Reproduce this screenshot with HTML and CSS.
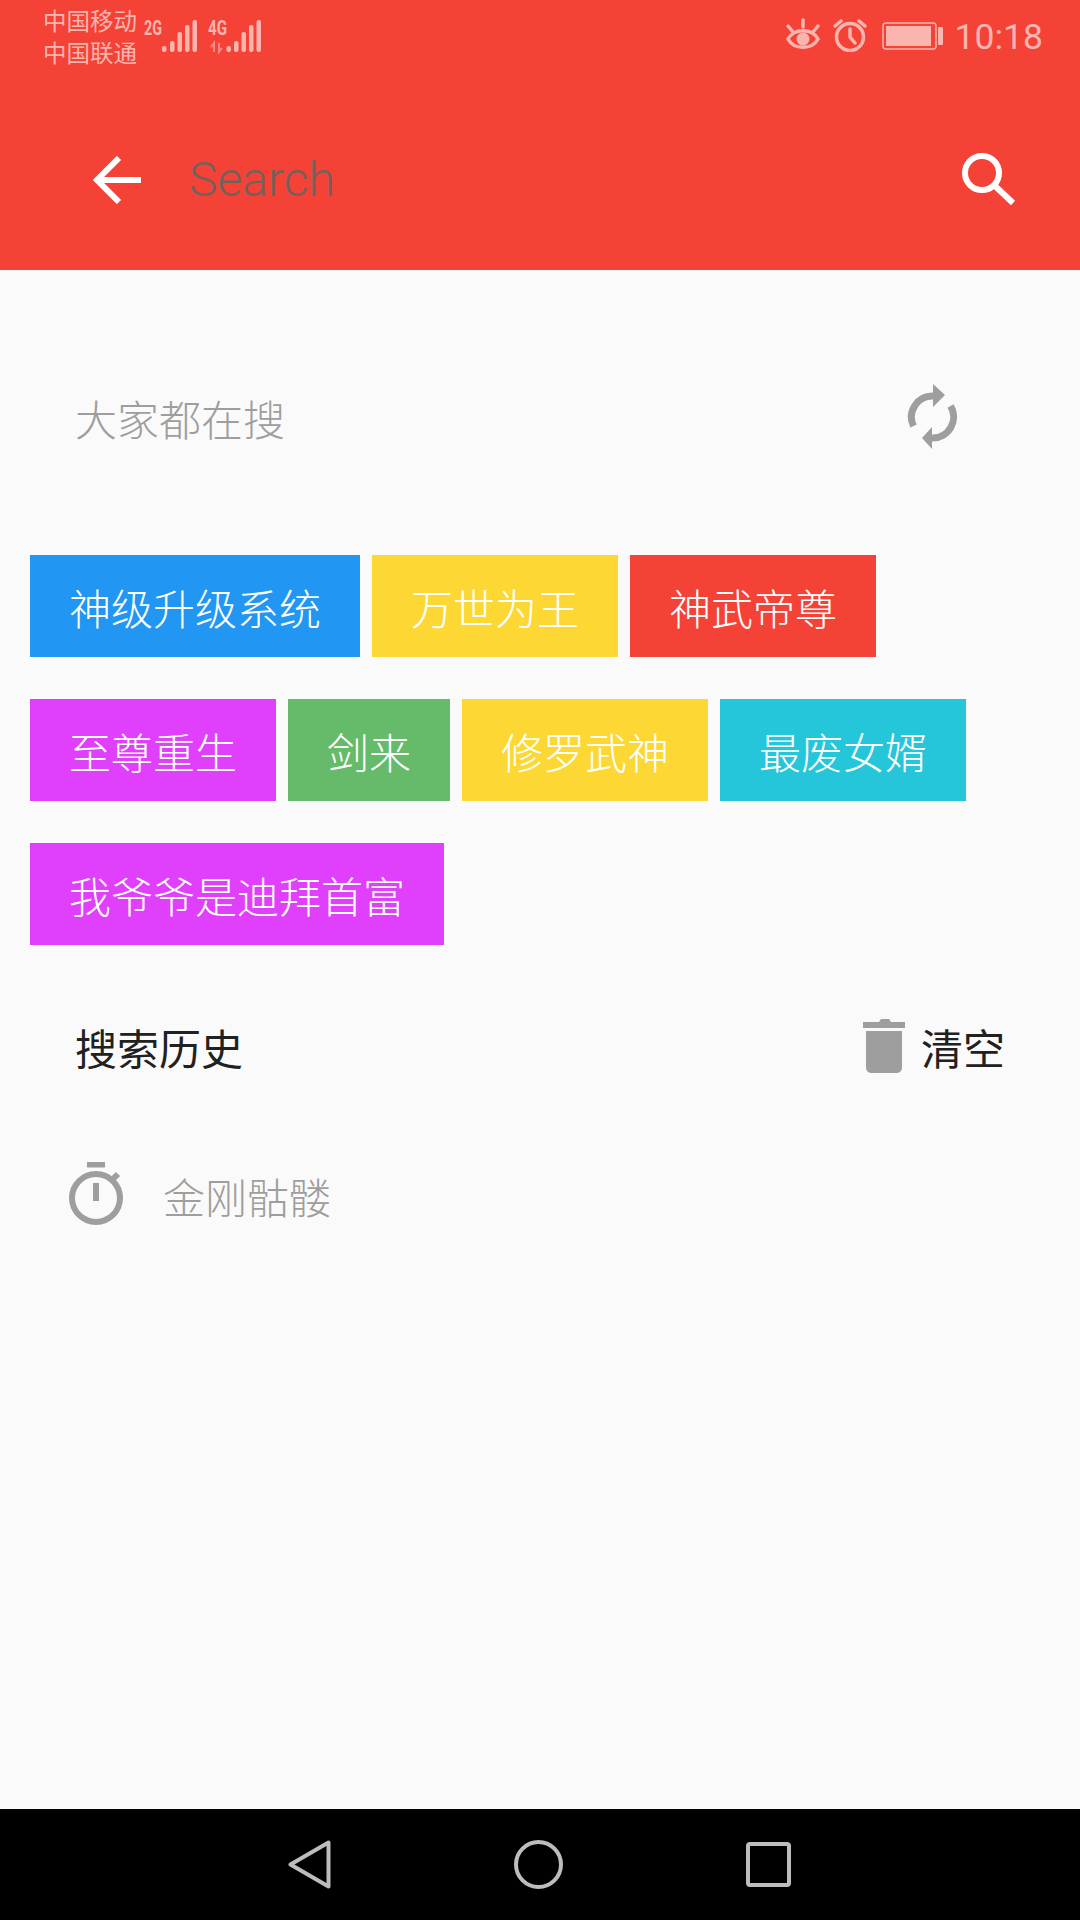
FILE: index.html
```html
<!DOCTYPE html>
<html lang="zh">
<head>
    <meta charset="UTF-8">
    <meta name="viewport" content="width=device-width, initial-scale=1.0">
    <title>Search</title>
    <link rel="stylesheet" href="styles.css">
</head>
<body>
    <header class="header">
        <div class="status-bar">
            <div class="carriers">
                <span>中国移动</span>
                <span>中国联通</span>
            </div>
            <svg class="signal" width="54" height="42" viewBox="144 12 54 42">
                <text x="144" y="35" class="net-label" textLength="18" lengthAdjust="spacingAndGlyphs">2G</text>
                <g class="bars">
                    <rect x="162" y="46" width="4.5" height="6" rx="2"/>
                    <rect x="170" y="41" width="4.5" height="11" rx="2"/>
                    <rect x="177.5" y="32" width="4.5" height="20" rx="2"/>
                    <rect x="185" y="25" width="4.5" height="27" rx="2"/>
                    <rect x="192.5" y="20" width="4.5" height="32" rx="2"/>
                </g>
            </svg>
            <svg class="signal signal-second" width="54" height="42" viewBox="208 12 54 42">
                <text x="208" y="35" class="net-label" textLength="19" lengthAdjust="spacingAndGlyphs">4G</text>
                <path class="updown" d="M214 52v-9l-3 4M219 43v9l3-4"/>
                <g class="bars">
                    <rect x="226.5" y="46" width="4.5" height="6" rx="2"/>
                    <rect x="234" y="41" width="4.5" height="11" rx="2"/>
                    <rect x="241.5" y="32" width="4.5" height="20" rx="2"/>
                    <rect x="249" y="25" width="4.5" height="27" rx="2"/>
                    <rect x="256.5" y="20" width="4.5" height="32" rx="2"/>
                </g>
            </svg>
            <div class="status-right">
                <svg class="status-icon" width="36" height="34" viewBox="0 0 36 34">
                    <path class="thin-line" d="M3 21C9 10 27 10 33 21C27 32 9 32 3 21Z"/>
                    <circle class="solid" cx="18" cy="21" r="6.5"/>
                    <path class="thin-line" d="M18 9V2M8 14L3 8M28 14L33 8"/>
                </svg>
                <svg class="status-icon" width="34" height="34" viewBox="0 0 34 34">
                    <circle cx="17" cy="19" r="13.5"/>
                    <path d="M17 11V19L22 25M2 8L8 3M32 8L26 3"/>
                </svg>
                <svg class="status-icon battery" width="61" height="28" viewBox="0 0 61 28">
                    <rect class="thin" x="1" y="1" width="53" height="26" rx="3"/>
                    <rect class="solid" x="4" y="4" width="45" height="20"/>
                    <rect class="solid" x="56" y="5" width="5" height="18" rx="1"/>
                </svg>
                <span class="clock">10:18</span>
            </div>
        </div>
        <div class="toolbar">
            <svg class="back-icon" width="48" height="48" viewBox="0 0 48 48">
                <path d="M48 24H4M26 2L4 24L26 46"/>
            </svg>
            <span class="search-hint">Search</span>
            <svg class="search-icon" width="54" height="54" viewBox="0 0 54 54">
                <circle cx="20" cy="20" r="17"/>
                <path d="M32 32L51 50"/>
            </svg>
        </div>
    </header>

    <main class="content">
        <div class="section-head hot-head">
            <span class="hot-title">大家都在搜</span>
            <svg class="refresh-icon" width="56" height="72" viewBox="905 384 56 72">
                <path class="arc" d="M913.500 426A21 21 0 0 1 933 396M950.500 406A21 21 0 0 1 932 438"/>
                <path class="head" d="M933 384L945 395L933 407ZM932 427L922 438L932 449Z"/>
            </svg>
        </div>

        <div class="tags">
            <span class="tag blue">神级升级系统</span>
            <span class="tag yellow">万世为王</span>
            <span class="tag red">神武帝尊</span>
            <span class="tag purple">至尊重生</span>
            <span class="tag green">剑来</span>
            <span class="tag yellow">修罗武神</span>
            <span class="tag cyan">最废女婿</span>
            <span class="tag purple">我爷爷是迪拜首富</span>
        </div>

        <div class="section-head history-head">
            <span class="history-title">搜索历史</span>
            <div class="clear-btn">
                <svg width="42" height="54" viewBox="0 0 42 54">
                    <path class="grey-fill" d="M0 3H16L18 0H26L28 3H42V9H0ZM3 12H39V48Q39 54 33 54H9Q3 54 3 48Z"/>
                </svg>
                <span>清空</span>
            </div>
        </div>

        <div class="history-item">
            <svg class="timer-icon" width="56" height="64" viewBox="0 0 56 64">
                <circle cx="27" cy="36" r="24"/>
                <path d="M18 2.500H36M27 21V39M44 17L49 12"/>
            </svg>
            <span>金刚骷髅</span>
        </div>
    </main>

    <nav class="nav-bar">
        <svg width="43" height="49" viewBox="0 0 43 49">
            <path d="M40.500 2.500V46.500L2.500 24.500Z"/>
        </svg>
        <svg width="49" height="49" viewBox="0 0 49 49">
            <circle cx="24.500" cy="24.500" r="22.500"/>
        </svg>
        <svg class="nav-square" width="45" height="45" viewBox="0 0 45 45">
            <rect x="2" y="2" width="41" height="41" rx="2"/>
        </svg>
    </nav>
</body>
</html>
```

FILE: styles.css
```css
:root {
    --red: #f44336;
    --status-color: #fbb5af;
    --grey: #9e9e9e;
    --font-family: 'Roboto', 'Noto Sans CJK SC', sans-serif;
}

* {
    margin: 0;
    padding: 0;
    box-sizing: border-box;
}

body {
    font-family: var(--font-family);
    background: #fafafa;
    height: 1920px;
    overflow: hidden;
    display: flex;
    flex-direction: column;
}

svg {
    display: block;
    flex-shrink: 0;
}

.header {
    height: 270px;
    background: var(--red);
}

.status-bar {
    height: 90px;
    display: flex;
    align-items: flex-start;
    padding: 0 37px 0 43px;
    color: var(--status-color);
}

.carriers {
    display: flex;
    flex-direction: column;
    font-size: 23.500px;
    line-height: 32px;
    padding-top: 6px;
    width: 101px;
}

.signal {
    margin-top: 12px;
}

.signal-second {
    margin-left: 10px;
}

.net-label {
    font-family: 'Roboto', sans-serif;
    font-size: 20px;
    font-weight: 700;
    fill: var(--status-color);
}

.bars {
    fill: var(--status-color);
}

.updown {
    fill: none;
    stroke: #f98a81;
    stroke-width: 2;
}

.status-right {
    margin-left: auto;
    display: flex;
    align-items: flex-start;
    padding-top: 18px;
    gap: 12px;
}

.status-icon {
    fill: none;
    stroke: var(--status-color);
    stroke-width: 3.5;
    stroke-linecap: round;
}

.status-icon .solid {
    fill: var(--status-color);
    stroke: none;
}

.status-icon .thin {
    stroke-width: 1.5;
}

.status-icon .thin-line {
    stroke-width: 3.5;
}

.battery {
    margin: 4px 0 0 3px;
}

.clock {
    font-size: 35.500px;
    line-height: 36px;
    margin-top: 1px;
}

.toolbar {
    height: 180px;
    display: flex;
    align-items: center;
    padding: 0 64px 0 93px;
}

.back-icon {
    fill: none;
    stroke: #fff;
    stroke-width: 6;
}

.search-hint {
    font-size: 48px;
    font-weight: 300;
    color: #76605c;
    margin: -2px 0 0 48px;
}

.search-icon {
    margin-left: auto;
    fill: none;
    stroke: #fff;
    stroke-width: 6;
}

.content {
    flex: 1;
}

.section-head {
    display: flex;
    justify-content: space-between;
    align-items: center;
    padding-left: 75px;
    font-size: 42px;
    font-weight: 300;
}

.hot-head {
    height: 72px;
    margin-top: 114px;
    padding-right: 119px;
}

.hot-title {
    color: var(--grey);
    margin-top: -5px;
}

.refresh-icon .arc {
    fill: none;
    stroke: var(--grey);
    stroke-width: 7;
}

.refresh-icon .head {
    fill: var(--grey);
}

.tags {
    display: flex;
    flex-wrap: wrap;
    gap: 42px 12px;
    margin-top: 99px;
    padding: 0 30px;
}

.tag {
    height: 102px;
    line-height: 92px;
    padding: 10px 39px 0;
    font-size: 42px;
    font-weight: 300;
    color: #fff;
}

.blue { background: #2196f3; }
.yellow { background: #fdd835; }
.red { background: var(--red); }
.purple { background: #e040fb; }
.green { background: #66bb6a; }
.cyan { background: #26c6da; }

.history-head {
    height: 60px;
    margin-top: 71px;
    padding-right: 75px;
    color: #212121;
    font-weight: 400;
}

.clear-btn {
    display: flex;
    align-items: center;
    gap: 16px;
}

.grey-fill {
    fill: var(--grey);
}

.history-item {
    display: flex;
    align-items: center;
    gap: 38px;
    margin-top: 86px;
    padding-left: 69px;
    font-size: 42px;
    font-weight: 300;
    color: var(--grey);
}

.history-item span {
    margin-top: 2px;
}

.timer-icon {
    fill: none;
    stroke: var(--grey);
    stroke-width: 6;
}

.nav-bar {
    height: 111px;
    background: #000;
    display: flex;
    align-items: flex-start;
    gap: 183px;
    padding: 31px 0 0 288px;
}

.nav-bar svg {
    fill: none;
    stroke: #bdbdbd;
    stroke-width: 4;
    stroke-linejoin: round;
}

.nav-bar .nav-square {
    margin-top: 2px;
}
```
